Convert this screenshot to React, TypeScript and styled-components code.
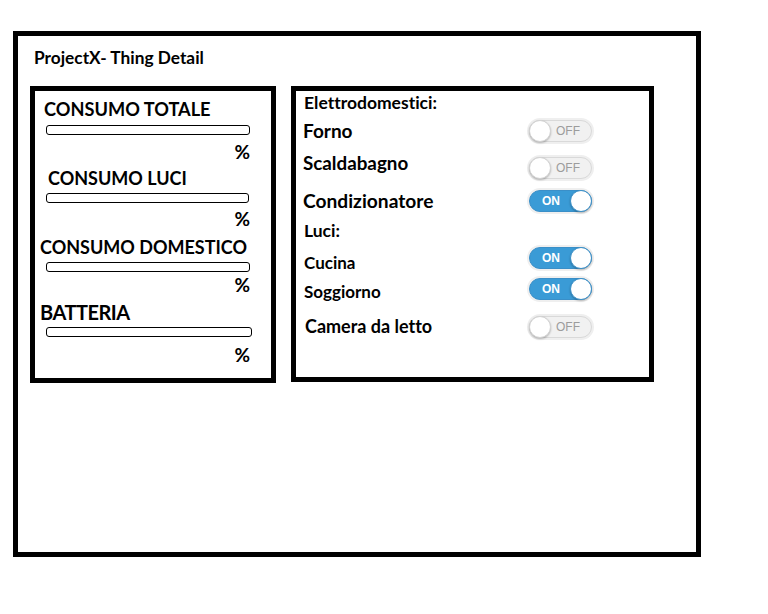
import React from 'react';
import styled, { createGlobalStyle } from 'styled-components';

const GlobalStyle = createGlobalStyle`
  html, body {
    margin: 0;
    padding: 0;
    background: #ffffff;
  }
  body {
    font-family: Lato, "Open Sans", "Liberation Sans", sans-serif;
    font-weight: 700;
    font-variant-ligatures: none;
    color: #000000;
  }
`;

const Frame = styled.div`
  box-sizing: border-box;
  margin: 31px 0 0 13px;
  width: 688px;
  height: 526px;
  border: 5px solid #000;
  padding: 12px 0 0 12px;
`;

const Title = styled.div`
  font-size: 17.3px;
  line-height: 20px;
  padding-left: 4px;
  margin-bottom: 18px;
`;

const Panels = styled.div`
  display: flex;
  align-items: flex-start;
  gap: 15px;
`;

const Panel = styled.div<{ $w: number; $h: number }>`
  box-sizing: border-box;
  width: ${p => p.$w}px;
  height: ${p => p.$h}px;
  border: 5px solid #000;
`;

const GaugeList = styled.div`
  display: flex;
  flex-direction: column;
  padding: 0 21px 0 0;
`;

const GaugeTitle = styled.div<{ $size: number; $indent: number; $mt: number; $ls: number }>`
  font-size: ${p => p.$size}px;
  letter-spacing: ${p => p.$ls}px;
  line-height: 22px;
  margin-top: ${p => p.$mt}px;
  padding-left: ${p => p.$indent}px;
  white-space: nowrap;
`;

const Bar = styled.div<{ $w: number; $mt: number }>`
  box-sizing: border-box;
  margin: ${p => p.$mt}px 0 0 11px;
  width: ${p => p.$w}px;
  height: 10px;
  border: 1px solid #000;
  border-radius: 3px;
  background: #fff;
`;

const Percent = styled.div<{ $mt: number }>`
  align-self: flex-end;
  font-size: 19px;
  line-height: 22px;
  margin-top: ${p => p.$mt}px;
`;

const SwitchList = styled.div`
  display: flex;
  flex-direction: column;
  padding: 0 0 0 7px;
`;

const Section = styled.div<{ $mt: number }>`
  font-size: 17.5px;
  line-height: 20px;
  margin-top: ${p => p.$mt}px;
  padding-left: 1px;
`;

const Row = styled.div<{ $mt: number }>`
  display: flex;
  align-items: center;
  height: 24px;
  margin-top: ${p => p.$mt}px;
`;

const Label = styled.div<{ $dy: number; $dx: number; $size: number }>`
  width: 226px;
  font-size: ${p => p.$size}px;
  line-height: 22px;
  padding-left: ${p => p.$dx}px;
  box-sizing: border-box;
  transform: translateY(${p => p.$dy}px);
  white-space: nowrap;
`;

const Track = styled.div<{ $on: boolean }>`
  box-sizing: border-box;
  position: relative;
  display: flex;
  align-items: center;
  justify-content: ${p => (p.$on ? 'flex-start' : 'flex-end')};
  width: 63px;
  height: 22px;
  border-radius: 11px;
  padding: ${p => (p.$on ? '0 0 0 12px' : '0 11px 0 0')};
  background: ${p => (p.$on ? '#3a9bd6' : '#f1f1f1')};
  border: 1px solid ${p => (p.$on ? '#3a8fc8' : '#d9d9d9')};
  box-shadow: 0 0 0 2px #efefef;
  font-family: "Liberation Sans", Arial, sans-serif;
  font-size: 12px;
  font-weight: ${p => (p.$on ? 700 : 400)};
  color: ${p => (p.$on ? '#ffffff' : '#9c9c9c')};
`;

const Knob = styled.span<{ $on: boolean }>`
  position: absolute;
  top: -1px;
  ${p => (p.$on ? 'right: -1px;' : 'left: -1px;')}
  box-sizing: border-box;
  width: 22px;
  height: 22px;
  border-radius: 50%;
  background: #ffffff;
  border: 1px solid ${p => (p.$on ? '#3a8fc8' : '#d2d2d2')};
  box-shadow: 0 1px 2px rgba(0, 0, 0, 0.25);
`;

const Toggle: React.FC<{ on: boolean }> = ({ on }) => (
  <Track $on={on}>
    {on ? 'ON' : 'OFF'}
    <Knob $on={on} />
  </Track>
);

const gauges = [
  { label: 'CONSUMO TOTALE', size: 18.2, ls: 0, indent: 9, mt: 7, barMt: 5, pctMt: 6, bar: 204 },
  { label: 'CONSUMO LUCI', size: 18, ls: 0, indent: 13, mt: 4, barMt: 4, pctMt: 5, bar: 203 },
  { label: 'CONSUMO DOMESTICO', size: 18, ls: 0, indent: 5, mt: 6, barMt: 4, pctMt: 2, bar: 204 },
  { label: 'BATTERIA', size: 20, ls: -0.5, indent: 5, mt: 5, barMt: 4, pctMt: 7, bar: 206 },
];

const appliances = [
  { label: 'Forno', on: false, mt: 6, dy: 0, dx: 0, size: 19 },
  { label: 'Scaldabagno', on: false, mt: 13, dy: -5, dx: -1, size: 18.8 },
  { label: 'Condizionatore', on: true, mt: 9, dy: 0, dx: 0, size: 19.2 },
];

const lights = [
  { label: 'Cucina', on: true, mt: 5, dy: 5, dx: 1, size: 17 },
  { label: 'Soggiorno', on: true, mt: 7, dy: 3, dx: 1, size: 17 },
  { label: 'Camera da letto', on: false, mt: 14, dy: -1, dx: 2, size: 18 },
];

const App: React.FC = () => (
  <>
    <GlobalStyle />
    <Frame>
      <Title>ProjectX- Thing Detail</Title>
      <Panels>
        <Panel $w={246} $h={297}>
          <GaugeList>
            {gauges.map(g => (
              <React.Fragment key={g.label}>
                <GaugeTitle $size={g.size} $ls={g.ls} $indent={g.indent} $mt={g.mt}>
                  {g.label}
                </GaugeTitle>
                <Bar $w={g.bar} $mt={g.barMt} />
                <Percent $mt={g.pctMt}>%</Percent>
              </React.Fragment>
            ))}
          </GaugeList>
        </Panel>
        <Panel $w={363} $h={296}>
          <SwitchList>
            <Section $mt={2}>Elettrodomestici:</Section>
            {appliances.map(a => (
              <Row key={a.label} $mt={a.mt}>
                <Label $dy={a.dy} $dx={a.dx} $size={a.size}>{a.label}</Label>
                <Toggle on={a.on} />
              </Row>
            ))}
            <Section $mt={8}>Luci:</Section>
            {lights.map(l => (
              <Row key={l.label} $mt={l.mt}>
                <Label $dy={l.dy} $dx={l.dx} $size={l.size}>{l.label}</Label>
                <Toggle on={l.on} />
              </Row>
            ))}
          </SwitchList>
        </Panel>
      </Panels>
    </Frame>
  </>
);

export default App;
